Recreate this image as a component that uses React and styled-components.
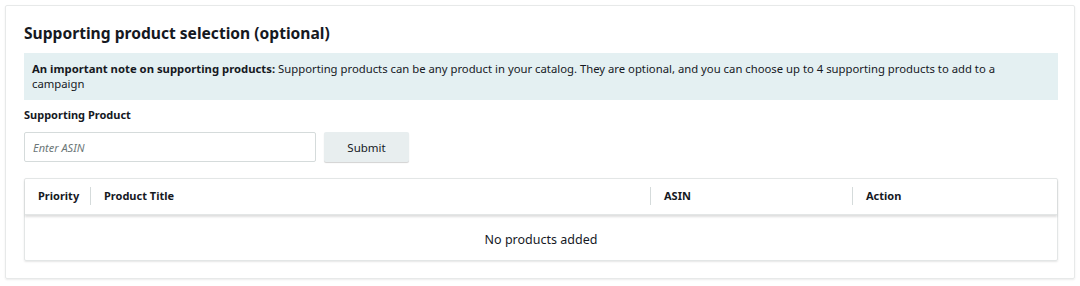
import React from "react";
import styled, { createGlobalStyle } from "styled-components";

const GlobalStyle = createGlobalStyle`
  html, body {
    margin: 0;
    padding: 0;
    background: #ffffff;
    font-family: "Noto Sans", "Open Sans", Arial, sans-serif;
    color: #16191f;
  }
`;

const Page = styled.div`
  padding: 5px;
  width: 1080px;
  box-sizing: border-box;
`;

const Card = styled.section`
  border: 1px solid #e7e9e9;
  box-shadow: 0 1px 2px rgba(0, 0, 0, 0.08);
  border-radius: 2px;
  padding: 17px 16px 17px 18px;
  display: flex;
  flex-direction: column;
`;

const Title = styled.h2`
  margin: 0 0 9px;
  font-size: 15.6px;
  line-height: 21px;
  font-weight: 700;
  color: #16191f;
`;

const Note = styled.div`
  background: #e4f0f2;
  padding: 8px 50px 9px 8px;
  font-size: 11.3px;
  line-height: 15px;
  color: #16191f;

  b {
    font-weight: 700;
  }
`;

const Label = styled.div`
  margin-top: 8px;
  font-size: 11px;
  line-height: 14px;
  font-weight: 700;
`;

const InputRow = styled.div`
  display: flex;
  gap: 8px;
  margin-top: 10px;
`;

const Input = styled.input`
  width: 292px;
  height: 30px;
  box-sizing: border-box;
  border: 1px solid #d5dbdb;
  border-radius: 2px;
  padding: 0 8px;
  font-family: inherit;
  font-size: 11px;
  color: #16191f;
  outline: none;

  &::placeholder {
    font-style: italic;
    color: #6c7778;
  }
`;

const Button = styled.button`
  width: 85px;
  height: 30px;
  border: none;
  border-radius: 2px;
  background: #e8eeef;
  box-shadow: 0 1px 1px rgba(0, 0, 0, 0.18);
  font-family: inherit;
  font-size: 11.5px;
  color: #16191f;
  cursor: pointer;
`;

const Table = styled.div`
  margin-top: 16px;
  border: 1px solid #e3e6e6;
  border-radius: 2px;
  box-shadow: 0 1px 2px rgba(0, 0, 0, 0.1);
`;

const HeadRow = styled.div`
  display: grid;
  grid-template-columns: 65px 560px 202px 1fr;
  height: 36px;
  box-sizing: border-box;
  padding-bottom: 2px;
  align-items: center;
  box-shadow: 0 2px 2px rgba(0, 0, 0, 0.13);
  border-bottom: 1px solid #e3e6e6;
`;

const HeadCell = styled.div`
  display: flex;
  align-items: center;
  font-size: 11px;
  font-weight: 700;
  padding-left: ${(p) => (p.$first ? "13px" : "0")};

  &::before {
    content: "";
    display: ${(p) => (p.$first ? "none" : "block")};
    width: 1px;
    height: 18px;
    background: #d5dbdb;
    margin-right: 13px;
  }
`;

const Empty = styled.div`
  height: 42px;
  margin-top: 3px;
  display: flex;
  align-items: center;
  justify-content: center;
  font-size: 12.5px;
  color: #16191f;
`;

export default function App() {
  return (
    <Page>
      <GlobalStyle />
      <Card>
        <Title>Supporting product selection (optional)</Title>
        <Note>
          <b>An important note on supporting products:</b> Supporting products
          can be any product in your catalog. They are optional, and you can
          choose up to 4 supporting products to add to a campaign
        </Note>
        <Label>Supporting Product</Label>
        <InputRow>
          <Input placeholder="Enter ASIN" />
          <Button>Submit</Button>
        </InputRow>
        <Table>
          <HeadRow>
            <HeadCell $first>Priority</HeadCell>
            <HeadCell>Product Title</HeadCell>
            <HeadCell>ASIN</HeadCell>
            <HeadCell>Action</HeadCell>
          </HeadRow>
          <Empty>No products added</Empty>
        </Table>
      </Card>
    </Page>
  );
}
